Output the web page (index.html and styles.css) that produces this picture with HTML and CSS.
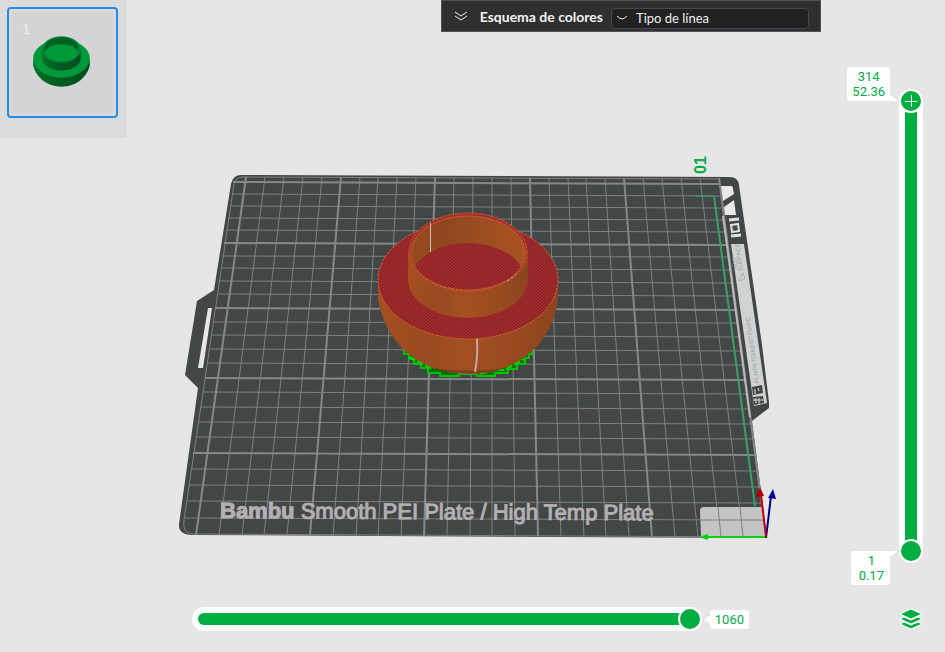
FILE: index.html
```html
<!DOCTYPE html>
<html lang="es">
<head>
<meta charset="utf-8">
<meta name="viewport" content="width=device-width, initial-scale=1">
<title>Vista previa</title>
<link rel="stylesheet" href="styles.css">
</head>
<body>
<svg class="scene" viewBox="0 0 945 652" role="img" aria-label="Placa de impresión con el modelo laminado">
  <defs>
    <pattern id="infill" width="4" height="3" patternUnits="userSpaceOnUse" patternTransform="rotate(-4)">
      <rect width="4" height="3" fill="#b42d30"/>
      <path d="M0 3L4 0M-1 .75L1 -.75M3 3.75L5 2.25" stroke="#5c1a1c" stroke-width="1"/>
    </pattern>
    <linearGradient id="wall">
      <stop offset="0" stop-color="#a44f20"/><stop offset=".25" stop-color="#994a20"/>
      <stop offset=".5" stop-color="#a34f22"/><stop offset=".75" stop-color="#994a20"/>
      <stop offset="1" stop-color="#8c441e"/>
    </linearGradient>
    <linearGradient id="inside">
      <stop offset="0" stop-color="#984a1f"/><stop offset=".3" stop-color="#8e461e"/>
      <stop offset=".5" stop-color="#984b21"/><stop offset="1" stop-color="#a95222"/>
    </linearGradient>
    <clipPath id="rim"><ellipse cx="468" cy="253" rx="57" ry="37"/></clipPath>
  </defs>

  <!-- build plate -->
  <path fill="#424646" d="M241 175L730 177Q738 177 739 185L762 345L769 402V408L752 421L767 538L190 535Q178 534 179 524L198 388L185 375L197 301L214 290L231 184Q233 175 241 175Z"/>
  <path fill="#e8e8e8" d="M208 308h4l-9 60h-5z"/>
  <path class="edge" d="M719 179L243 177Q236 177 234 184L184 520Q182 533 192 534L766 537"/>

  <path class="line" d="M265 177L219 535M284 177L242 535M303 177L264 535M322 177L287 535M360 177L333 536M378 177L356 536M397 177L378 536M416 177L401 536M454 177L447 536M473 177L470 536M492 177L492 536M511 177L515 536M549 178L561 536M568 178L584 537M586 178L606 537M605 178L629 537M643 178L675 537M662 178L698 537M681 178L720 537M700 178L743 537"/>
  <path class="line" d="M232 194L721 196M230 206L723 208M228 218L724 220M226 230L726 232M222 256L729 257M221 268L731 270M219 281L733 283M217 294L734 296M213 322L738 323M211 335L740 337M209 349L742 351M207 363L744 365M203 392L747 394M200 407L749 409M198 422L751 424M196 437L753 439M191 469L757 471M189 485L760 487M187 501L762 503M185 518L764 520"/>
  <path class="line major" d="M246 177L196 535M341 177L310 535M435 177L424 536M530 178L538 536M624 178L652 537M719 178L766 537M233 182L719 184M224 243L728 245M215 308L737 310M205 378L745 380M193 453L755 455"/>

  <!-- exclusion area and printable bounds -->
  <path fill="#c3c5c5" d="M704 507h58l4 30h-65l-1-26q0-4 4-4z"/>
  <path class="line" d="M718 507l3 30M740 507l3 30M700 520h64"/>
  <path fill="none" stroke="#2fae65" stroke-width="1" d="M695 196h19"/>
  <path fill="none" stroke="#399f67" stroke-width="2" d="M714 196L755 506"/>

  <!-- plate label strip -->
  <path fill="none" stroke="#b9bbbb" stroke-width="2" d="M723 216L750 417"/>
  <path fill="#e9eaea" d="M721 186h10q2 0 2 3l1 5l-11 7zM734 200l2 15h-11l-1-8z"/>
  <g fill="none" stroke="#dfe1e1" stroke-width="2"><path d="M731 225l7-1l1 7l-7 1z"/><path stroke-width="3" d="M729 220l10-1M731 236l10-1"/></g>
  <path fill="#d0d3d3" d="M731 244h13l23 159l-13 3z"/>
  <g class="strip"><text transform="translate(743 271) rotate(-98)">SURFACE</text><text transform="translate(738 269) rotate(-98)">HOT</text><text transform="translate(759 383) rotate(-98)">PLA/PETG/ABS/TPU/PC</text></g>
  <path fill="none" stroke="#adb1b1" d="M738 281l7-2l-2-6z"/>
  <g fill="#424646"><path d="M752 387l10-2l1 8l-10 2zM753 397l10-1l1 7l-10 2z"/></g>
  <path fill="none" stroke="#dfe1e1" d="M755 394v-5M758 388l1 3M756 403v-5M753 400h10M759 404v-6"/>

  <text class="plate-name" x="220" y="518" transform="rotate(.3 220 518)"><tspan font-weight="700">Bambu</tspan> Smooth PEI Plate / High Temp Plate</text>
  <text class="plate-number" transform="translate(706 174) rotate(-90)">01</text>

  <!-- axes -->
  <g fill="none" stroke-width="2"><path stroke="#0ad20a" d="M766 537h-58"/><path stroke="#00008b" d="M766 538l5-42"/><path stroke="#c80000" d="M766 537l-5-42"/></g>
  <path fill="#0ad20a" d="M699 537l9-3v6z"/><path fill="#b40000" d="M760 487l4 9l-8 1z"/><path fill="#00009b" d="M773 489l3 10l-8-1z"/>

  <!-- support brim -->
  <path fill="#067006" stroke="#05c005" stroke-width="2" d="M404 350V354H409V359H414V364H421V368H428V373H440V376H459V374H477V376H495V373H508V369H517V364H525V358H529V354H532V350L500 340H434Z"/>
  <path fill="none" stroke="#05da05" stroke-width="2" stroke-dasharray="7 2" d="M409 357l12 6l10 5h13l8 4M480 374l12-4h12l11-6l9-5"/>

  <!-- sliced model -->
  <path fill="url(#wall)" d="M378 280V296C380 325 404 373 468 374C530 374 556 330 558 297V280Z"/>
  <path fill="#3a2a10" opacity=".35" d="M427 367Q468 380 510 367Q470 374 427 367Z"/>
  <ellipse cx="468" cy="280" rx="90" ry="59" fill="url(#infill)" stroke="#cf6330" stroke-width="1" stroke-dasharray="3 1"/>
  <path fill="url(#wall)" d="M408 252V279A60 39 0 0 0 528 279V252Z"/>
  <ellipse cx="468" cy="252" rx="59" ry="39" fill="#a82e2b" stroke="#c65f2c" stroke-dasharray="3 1"/>
  <ellipse cx="468" cy="253" rx="57" ry="37" fill="url(#inside)"/>
  <g clip-path="url(#rim)"><ellipse cx="468" cy="280" rx="57" ry="37" fill="url(#infill)"/></g>
  <ellipse cx="468" cy="253" rx="57" ry="37" fill="none" stroke="#c9652f" stroke-dasharray="3 1"/>
  <path fill="none" stroke="#c9b9b0" stroke-width="1" d="M430.5 223V252"/>
  <path fill="none" stroke="#c2aca0" stroke-width="2" d="M477 339Q478 356 475 372"/>
  <path fill="none" stroke="#d6b3ac" stroke-dasharray="2 3" d="M507 281Q514 277 518 272"/>
</svg>

<div class="workspace">
  <nav class="plates" aria-label="Placas">
    <button class="plate" aria-label="Placa 1">
      <span class="thumb">
        <span class="plate-index">1</span>
        <svg viewBox="0 0 100 100" aria-hidden="true">
          <defs><linearGradient id="green-wall"><stop offset="0" stop-color="#00702a"/><stop offset=".45" stop-color="#005c22"/><stop offset="1" stop-color="#004d1d"/></linearGradient></defs>
          <path fill="url(#green-wall)" d="M21 47V53C24 65 35 74 49 74S74 65 77 53V47Z"/>
          <ellipse cx="49" cy="46" rx="28" ry="19" fill="#00993a"/>
          <path fill="url(#green-wall)" d="M30 37V46A19 12 0 0 0 68 46V37Z"/>
          <ellipse cx="49" cy="37" rx="19" ry="13" fill="#008c35"/>
          <ellipse cx="49" cy="37" rx="17" ry="12" fill="#006125"/>
          <path fill="#00993a" d="M32 40Q36 32 49 32T66 40Q62 49 49 49T32 40Z"/>
        </svg>
      </span>
    </button>
  </nav>

  <header class="toolbar">
    <button class="collapse" aria-label="Contraer">
      <svg width="14" height="12" viewBox="0 0 14 12"><path d="M1 2l6 4l6-4M1 6l6 4l6-4"/></svg>
    </button>
    <label class="title" for="scheme">Esquema de colores</label>
    <span class="select">
      <svg width="12" height="6" viewBox="0 0 12 6" aria-hidden="true"><path d="M1 1q3 3 5 3t5-3"/></svg>
      <select id="scheme"><option>Tipo de línea</option></select>
    </span>
  </header>

  <aside class="layers">
    <div class="layer-range">
      <div class="values">
        <output class="bubble top" for="layer-top">314<br>52.36</output>
        <output class="bubble bottom" for="layer-bottom">1<br>0.17</output>
      </div>
      <div class="track vertical">
        <input class="upper" id="layer-top" type="range" min="1" max="314" value="314" aria-label="Capa superior">
        <input id="layer-bottom" type="range" min="1" max="314" value="1" aria-label="Capa inferior">
      </div>
    </div>
    <button class="layers-button" aria-label="Capas">
      <svg width="24" height="24" viewBox="0 0 24 24"><g fill="#00ae42" stroke="#fff" stroke-width="1"><path d="M1 17l4-2l7 3l7-3l4 2l-11 5z"/><path d="M1 12l4-2l7 3l7-3l4 2l-11 5z"/><path d="M1 7l11-5l11 5l-11 5z"/></g></svg>
    </button>
  </aside>

  <footer class="moves">
    <div class="track">
      <input id="move" type="range" min="0" max="1060" value="1060" aria-label="Movimiento">
    </div>
    <output class="bubble side" for="move">1060</output>
  </footer>
</div>
</body>
</html>
```
FILE: styles.css
```css
:root {
  --green: #00ae42;
  --back: #e6e6e6;
}

* {
  box-sizing: border-box;
}

body {
  margin: 0;
  background: var(--back);
  font-family: Lato, "Open Sans", sans-serif;
  overflow: hidden;
}

button {
  margin: 0;
  padding: 0;
  border: 0;
  background: none;
  font: inherit;
}

svg {
  display: block;
}

/* 3D view behind the controls */
.scene {
  position: absolute;
  inset: 0;
  width: 100%;
  height: 100%;
}

.line {
  fill: none;
  stroke: #7d817f;
  stroke-width: 1;
}

.line.major {
  stroke: #858986;
  stroke-width: 2;
}

.edge {
  fill: none;
  stroke: #7d817f;
  stroke-width: 1;
}

.strip {
  fill: #9b9f9f;
  font: 6px "Liberation Sans", sans-serif;
}

.plate-name {
  fill: #b3b0b2;
  stroke: #b3b0b2;
  stroke-width: 1;
  font: 22px "Liberation Sans", sans-serif;
}

.plate-number {
  fill: var(--green);
  font: 700 16px "Liberation Sans", sans-serif;
}

.workspace {
  position: relative;
  display: grid;
  grid-template: "plates toolbar layers" 1fr "moves moves layers" auto / auto 1fr 124px;
  height: 100vh;
}

/* plate list */
.plates {
  grid-area: plates;
  align-self: start;
  padding: 7px 9px 20px 7px;
  border-radius: 0 0 4px 0;
  background: #dbdbdb;
}

.plate {
  display: block;
  padding: 3px;
  border: 2px solid #238de8;
  border-radius: 4px;
}

.thumb {
  display: grid;
  width: 101px;
  background: #d4d4d4;
}

.thumb > * {
  grid-area: 1 / 1;
}

.plate-index {
  padding: 8px 10px;
  color: #f0f0f0;
  font-size: 14px;
  text-align: left;
}

/* colour scheme bar */
.toolbar {
  grid-area: toolbar;
  place-self: start end;
  display: flex;
  align-items: center;
  height: 32px;
  padding: 0 11px 0 12px;
  border: 1px solid #50505a;
  background: #2f2f2f;
  color: #f2f2f2;
}

.toolbar svg {
  fill: none;
  stroke: #f0f0f0;
  stroke-width: 1;
}

.title {
  margin: 0 8px 0 12px;
  font-size: 14px;
  font-weight: 700;
}

.select {
  display: grid;
  align-items: center;
  width: 198px;
  margin-top: 4px;
}

.select > * {
  grid-area: 1 / 1;
}

.select svg {
  z-index: 1;
  margin-left: 5px;
  pointer-events: none;
}

select {
  appearance: none;
  height: 21px;
  padding: 0 24px;
  border: 1px solid #47474f;
  border-radius: 4px;
  background: #212121;
  color: #f0f0f0;
  font: 13px Lato, sans-serif;
}

/* sliders */
.track {
  position: relative;
  display: grid;
  flex: 1;
  height: 24px;
  border-radius: 12px;
  background: #fff;
}

.track::before {
  content: "";
  position: absolute;
  inset: 6px;
  border-radius: 6px;
  background: var(--green);
}

.track.vertical {
  flex: none;
  width: 24px;
  height: auto;
  margin: 22px 0;
}

.track input {
  grid-area: 1 / 1;
  appearance: none;
  z-index: 1;
  width: 100%;
  height: 100%;
  margin: 0;
  background: none;
  pointer-events: none;
}

.track.vertical input {
  writing-mode: vertical-lr;
  direction: rtl;
}

.track input::-webkit-slider-thumb {
  appearance: none;
  width: 24px;
  height: 24px;
  border: 2px solid #fff;
  border-radius: 50%;
  background: var(--green);
  pointer-events: auto;
}

.track .upper::-webkit-slider-thumb {
  background: linear-gradient(#fff, #fff) center / 12px 1px no-repeat, linear-gradient(#fff, #fff) center / 1px 12px no-repeat, var(--green);
}

.bubble {
  position: relative;
  padding: 2px 5px;
  border-radius: 3px;
  background: #fff;
  color: var(--green);
  font: 13px/15px Roboto, sans-serif;
  text-align: center;
}

.bubble::after {
  content: "";
  position: absolute;
  left: 100%;
  width: 8px;
  height: 6px;
  background: #fff;
}

.bubble.bottom {
  padding: 2px 6px 2px 8px;
}

.bubble.top::after {
  bottom: 0;
  clip-path: polygon(0 0, 100% 100%, 0 100%);
}

.bubble.bottom::after {
  top: 0;
  clip-path: polygon(0 0, 100% 0, 0 100%);
}

.bubble.side::after {
  top: 6px;
  right: 100%;
  left: auto;
  width: 5px;
  height: 8px;
  clip-path: polygon(0 50%, 100% 0, 100% 100%);
}

.layers {
  grid-area: layers;
  display: flex;
  flex-direction: column;
  align-items: flex-end;
  gap: 22px;
  padding: 67px 22px 21px 0;
}

.layer-range {
  display: flex;
  flex: 1;
  gap: 9px;
}

.values {
  display: flex;
  flex-direction: column;
  align-items: flex-end;
  justify-content: space-between;
}

.moves {
  grid-area: moves;
  display: flex;
  align-items: center;
  gap: 8px;
  padding: 0 72px 21px 192px;
}
```
